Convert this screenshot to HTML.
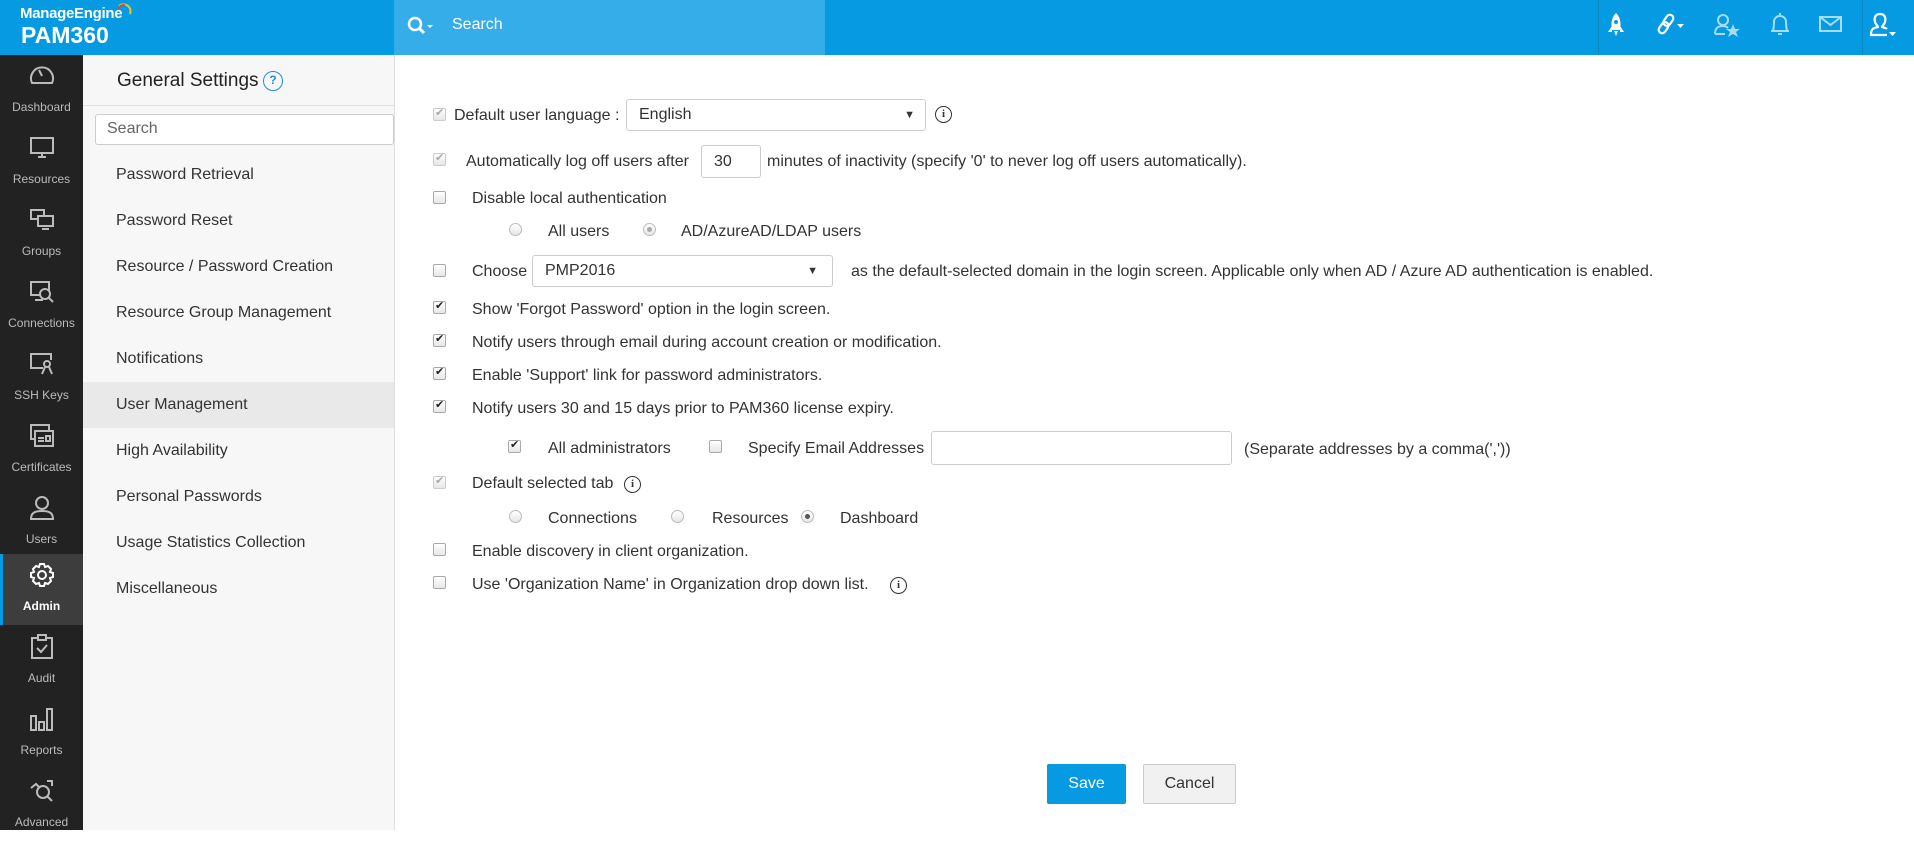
<!DOCTYPE html>
<html><head><meta charset="utf-8"><style>
*{box-sizing:border-box;margin:0;padding:0}
body{width:1914px;height:830px;overflow:hidden;font-family:"Liberation Sans",sans-serif;background:#fff;color:#333;position:relative}
.a{position:absolute;white-space:nowrap}
#hdr{position:absolute;left:0;top:0;width:1914px;height:55px;background:#069ae2}
#srch{position:absolute;left:394px;top:0;width:431px;height:55px;background:#35ade9}
#side{position:absolute;left:0;top:55px;width:83px;height:775px;background:#222}
.si{position:absolute;left:0;width:83px;height:72px;text-align:center;color:#bbb;font-size:12px}
.si svg{position:absolute;left:29px;top:8px}
.si span{position:absolute;left:0;right:0;top:45px}
#panel{position:absolute;left:83px;top:55px;width:312px;height:775px;background:#f7f7f7;border-right:1px solid #ddd}
.mi{position:absolute;left:0;width:311px;height:46px;line-height:46px;padding-left:33px;font-size:16px;color:#333}
.cb{position:absolute;width:13px;height:13px;border:1px solid #aaa;border-radius:2px;background:linear-gradient(#fff,#e6e6e6)}
.cb.c::after{content:"✔";position:absolute;left:1px;top:-3px;font-size:11px;color:#222}
.cb.d{border-color:#ccc}.cb.d::after{content:"✔";position:absolute;left:1px;top:-3px;font-size:11px;color:#aaa}
.rd{position:absolute;width:13px;height:13px;border:1px solid #bbb;border-radius:50%;background:linear-gradient(#fff,#e6e6e6)}
.rd.s::after{content:"";position:absolute;left:3px;top:3px;width:5px;height:5px;border-radius:50%;background:#555}
.rd.sd::after{content:"";position:absolute;left:3px;top:3px;width:5px;height:5px;border-radius:50%;background:#aaa}
.t{position:absolute;font-size:16px;color:#333;white-space:nowrap;margin-top:2px}
.box{position:absolute;border:1px solid #ccc;border-radius:3px;background:#fff;font-size:16px;padding-left:12px}
.info{position:absolute;width:17px;height:17px;border:1.5px solid #333;border-radius:50%;font:bold 11px "Liberation Serif",serif;text-align:center;line-height:14px;color:#333}
</style></head><body>
<div id="hdr"></div>
<div class="a" style="left:20px;top:5px;color:#fff;font-size:15px;font-weight:bold;letter-spacing:-0.3px">ManageEngine</div>
<svg class="a" style="left:116px;top:2px" width="18" height="16"><path d="M3 4 A7 7 0 0 1 14 12" stroke="#f5c518" stroke-width="2" fill="none"/><path d="M2 7 A6 6 0 0 1 9 3" stroke="#e23b3b" stroke-width="1.5" fill="none"/></svg>
<div class="a" style="left:21px;top:22px;color:#fff;font-size:23px;font-weight:bold">PAM360</div>
<div id="srch"></div>
<svg class="a" style="left:406px;top:15px" width="28" height="22"><circle cx="9" cy="9" r="6" stroke="#fff" stroke-width="2.5" fill="none"/><path d="M13 13l5 5" stroke="#fff" stroke-width="3"/><path d="M21 10l3 3 3-3z" fill="#fff"/></svg>
<div class="a" style="left:452px;top:16px;color:#fff;font-size:16px">Search</div>
<div class="a" style="left:1598px;top:0;width:1px;height:55px;background:#0a86c4"></div>
<div class="a" style="left:1862px;top:0;width:1px;height:55px;background:#0a86c4"></div>
<svg class="a" style="left:1605px;top:12px" width="22" height="26"><path d="M11 1 C16 6 16 12 15 18 H7 C6 12 6 6 11 1Z" fill="#fff"/><circle cx="11" cy="10" r="2" fill="#069ae2"/><path d="M7 14 L3 20 H7Z M15 14 L19 20 H15Z" fill="#fff"/><path d="M9 19h4l-2 5z" fill="#fff"/></svg>
<svg class="a" style="left:1656px;top:12px" width="30" height="26"><g stroke="#fff" stroke-width="2.2" fill="none"><rect x="9" y="2" width="7" height="12" rx="3.5" transform="rotate(35 12 8)"/><rect x="4" y="10" width="7" height="12" rx="3.5" transform="rotate(35 8 16)"/></g><path d="M21 12h7l-3.5 4z" fill="#fff"/></svg>
<svg class="a" style="left:1713px;top:12px" width="28" height="28" opacity=".75"><g stroke="#dff2fc" stroke-width="2" fill="none"><circle cx="10" cy="8" r="5"/><path d="M2 22 C2 15 6 14 10 14 C12 14 14 15 15 16"/><path d="M2 22h10"/></g><path d="M20 12l2 5 5 0-4 3 2 5-5-3-5 3 2-5-4-3 5 0z" fill="#dff2fc"/></svg>
<svg class="a" style="left:1769px;top:12px" width="22" height="26" opacity=".75"><g stroke="#dff2fc" stroke-width="2" fill="none"><path d="M4 19 C5 15 5 12 5 10 C5 6 8 4 11 4 C14 4 17 6 17 10 C17 12 17 15 18 19Z"/><path d="M2 19h18"/><path d="M9 22h4"/><path d="M11 1v3"/></g></svg>
<svg class="a" style="left:1818px;top:15px" width="26" height="20" opacity=".75"><g stroke="#dff2fc" stroke-width="2" fill="none"><rect x="2" y="2" width="21" height="14"/><path d="M2 2l10.5 8 10.5-8"/></g></svg>
<svg class="a" style="left:1868px;top:12px" width="30" height="28"><g stroke="#fff" stroke-width="2.2" fill="none"><path d="M12 2 C7 2 6 6 7 10 C8 13 10 14 10 15 C4 16 3 18 3 23 H19"/><path d="M12 2 C17 2 18 6 17 10 C16 13 14 14 14 15 C16 15.5 18 16 19 17"/></g><path d="M21 20h7l-3.5 4z" fill="#fff"/></svg>

<div id="side">
<div class="si" style="top:0"><svg width="26" height="26"><g stroke="#bbb" stroke-width="2" fill="none"><path d="M3 20 A11 11 0 1 1 23 20Z"/><path d="M13 13l-3-6"/></g></svg><span>Dashboard</span></div>
<div class="si" style="top:72px"><svg width="26" height="26"><g stroke="#bbb" stroke-width="2" fill="none"><rect x="2" y="3" width="22" height="15"/><path d="M9 22h8M13 18v4"/></g></svg><span>Resources</span></div>
<div class="si" style="top:144px"><svg width="26" height="26"><g stroke="#bbb" stroke-width="2" fill="none"><rect x="2" y="3" width="13" height="9"/><rect x="9" y="9" width="15" height="10" fill="#222"/><path d="M13 22h7"/></g></svg><span>Groups</span></div>
<div class="si" style="top:216px"><svg width="26" height="26"><g stroke="#bbb" stroke-width="2" fill="none"><rect x="2" y="3" width="18" height="13"/><circle cx="16" cy="15" r="5" fill="#222"/><path d="M20 19l4 4M6 21h8"/></g></svg><span>Connections</span></div>
<div class="si" style="top:288px"><svg width="26" height="26"><g stroke="#bbb" stroke-width="2" fill="none"><path d="M14 17H2V3h20v6"/><circle cx="18" cy="13" r="3"/><path d="M16 16l-3 7M20 16l3 7"/></g></svg><span>SSH Keys</span></div>
<div class="si" style="top:360px"><svg width="26" height="26"><g stroke="#bbb" stroke-width="2" fill="none"><rect x="2" y="2" width="18" height="14"/><rect x="6" y="8" width="18" height="15" fill="#222"/><path d="M9 15h6M9 18h6"/><rect x="17" y="13" width="4" height="5"/></g></svg><span>Certificates</span></div>
<div class="si" style="top:432px"><svg width="26" height="26"><g stroke="#bbb" stroke-width="2" fill="none"><circle cx="13" cy="8" r="6"/><path d="M2 24c0-7 5-8 11-8s11 1 11 8z"/></g></svg><span>Users</span></div>
<div class="si" style="top:499px;background:#3d3d3d;color:#fff;height:71px"><div class="a" style="left:0;top:0;width:3px;height:71px;background:#069ae2"></div><svg width="26" height="26"><g stroke="#fff" stroke-width="2" fill="none"><circle cx="13" cy="13" r="4"/><path d="M11 2h4l1 3 3-1 3 3-1 3 3 1v4l-3 1 1 3-3 3-3-1-1 3h-4l-1-3-3 1-3-3 1-3-3-1v-4l3-1-1-3 3-3 3 1z"/></g></svg><span style="font-weight:bold">Admin</span></div>
<div class="si" style="top:571px"><svg width="26" height="26"><g stroke="#bbb" stroke-width="2" fill="none"><rect x="3" y="4" width="20" height="20"/><rect x="9" y="1" width="8" height="5" fill="#222"/><path d="M8 14l4 4 6-7"/></g></svg><span>Audit</span></div>
<div class="si" style="top:643px"><svg width="26" height="26"><g stroke="#bbb" stroke-width="2" fill="none"><rect x="2" y="10" width="5" height="14"/><rect x="10" y="16" width="5" height="8"/><rect x="18" y="3" width="5" height="21"/></g></svg><span>Reports</span></div>
<div class="si" style="top:715px"><svg width="26" height="26"><g stroke="#bbb" stroke-width="2" fill="none"><circle cx="14" cy="14" r="6"/><path d="M18 18l5 5M2 10l5-4 4 4M18 3h5v5"/></g></svg><span>Advanced</span></div>
</div>

<div id="panel">
<div class="a" style="left:34px;top:15px;font-size:19px;color:#222">General Settings</div>
<div class="a" style="left:180px;top:16px;width:20px;height:20px;border:1.8px solid #1a8fe0;border-radius:50%;color:#1a8fe0;font-size:12px;font-weight:bold;text-align:center;line-height:17px">?</div>
<div class="a" style="left:0;top:50px;width:311px;height:1px;background:#e2e2e2"></div>
<div class="a" style="left:12px;top:59px;width:299px;height:31px;border:1px solid #ccc;border-radius:3px;background:#fff;font-size:16px;color:#666;padding:5px 0 0 11px">Search</div>
<div class="mi" style="top:97px">Password Retrieval</div>
<div class="mi" style="top:143px">Password Reset</div>
<div class="mi" style="top:189px">Resource / Password Creation</div>
<div class="mi" style="top:235px">Resource Group Management</div>
<div class="mi" style="top:281px">Notifications</div>
<div class="mi" style="top:327px;background:#e9e9e9">User Management</div>
<div class="mi" style="top:373px">High Availability</div>
<div class="mi" style="top:419px">Personal Passwords</div>
<div class="mi" style="top:465px">Usage Statistics Collection</div>
<div class="mi" style="top:511px">Miscellaneous</div>
</div>

<!-- content -->
<div class="cb d" style="left:433px;top:108px"></div>
<div class="t" style="left:454px;top:105px">Default user language :</div>
<div class="box" style="left:626px;top:99px;width:300px;height:32px;line-height:30px">English<span style="position:absolute;right:10px;font-size:11px">▼</span></div>
<div class="info" style="left:935px;top:106px">i</div>

<div class="cb d" style="left:433px;top:153px"></div>
<div class="t" style="left:466px;top:151px">Automatically log off users after</div>
<div class="box" style="left:701px;top:145px;width:60px;height:33px;line-height:31px">30</div>
<div class="t" style="left:767px;top:151px">minutes of inactivity (specify '0' to never log off users automatically).</div>

<div class="cb" style="left:433px;top:191px"></div>
<div class="t" style="left:472px;top:188px">Disable local authentication</div>
<div class="rd" style="left:509px;top:223px"></div>
<div class="t" style="left:548px;top:221px">All users</div>
<div class="rd sd" style="left:643px;top:223px"></div>
<div class="t" style="left:681px;top:221px">AD/AzureAD/LDAP users</div>

<div class="cb" style="left:433px;top:264px"></div>
<div class="t" style="left:472px;top:261px">Choose</div>
<div class="box" style="left:532px;top:255px;width:301px;height:32px;line-height:30px">PMP2016<span style="position:absolute;right:14px;font-size:11px">▼</span></div>
<div class="t" style="left:851px;top:261px">as the default-selected domain in the login screen. Applicable only when AD / Azure AD authentication is enabled.</div>

<div class="cb c" style="left:433px;top:301px"></div>
<div class="t" style="left:472px;top:299px">Show 'Forgot Password' option in the login screen.</div>
<div class="cb c" style="left:433px;top:334px"></div>
<div class="t" style="left:472px;top:332px">Notify users through email during account creation or modification.</div>
<div class="cb c" style="left:433px;top:367px"></div>
<div class="t" style="left:472px;top:365px">Enable 'Support' link for password administrators.</div>
<div class="cb c" style="left:433px;top:400px"></div>
<div class="t" style="left:472px;top:398px">Notify users 30 and 15 days prior to PAM360 license expiry.</div>

<div class="cb c" style="left:508px;top:440px"></div>
<div class="t" style="left:548px;top:438px">All administrators</div>
<div class="cb" style="left:709px;top:440px"></div>
<div class="t" style="left:748px;top:438px">Specify Email Addresses</div>
<div class="box" style="left:931px;top:431px;width:301px;height:34px"></div>
<div class="t" style="left:1244px;top:439px">(Separate addresses by a comma(','))</div>

<div class="cb d" style="left:433px;top:476px"></div>
<div class="t" style="left:472px;top:473px">Default selected tab</div>
<div class="info" style="left:624px;top:476px">i</div>
<div class="rd" style="left:509px;top:510px"></div>
<div class="t" style="left:548px;top:508px">Connections</div>
<div class="rd" style="left:671px;top:510px"></div>
<div class="t" style="left:712px;top:508px">Resources</div>
<div class="rd s" style="left:801px;top:510px"></div>
<div class="t" style="left:840px;top:508px">Dashboard</div>

<div class="cb" style="left:433px;top:543px"></div>
<div class="t" style="left:472px;top:541px">Enable discovery in client organization.</div>
<div class="cb" style="left:433px;top:576px"></div>
<div class="t" style="left:472px;top:574px">Use 'Organization Name' in Organization drop down list.</div>
<div class="info" style="left:890px;top:577px">i</div>

<div class="a" style="left:1047px;top:764px;width:79px;height:40px;background:#069ae2;border-radius:2px;color:#fff;font-size:16px;text-align:center;line-height:40px">Save</div>
<div class="a" style="left:1143px;top:764px;width:93px;height:40px;background:#f1f1f1;border:1px solid #ccc;border-radius:2px;color:#333;font-size:16px;text-align:center;line-height:38px">Cancel</div>
</body></html>
